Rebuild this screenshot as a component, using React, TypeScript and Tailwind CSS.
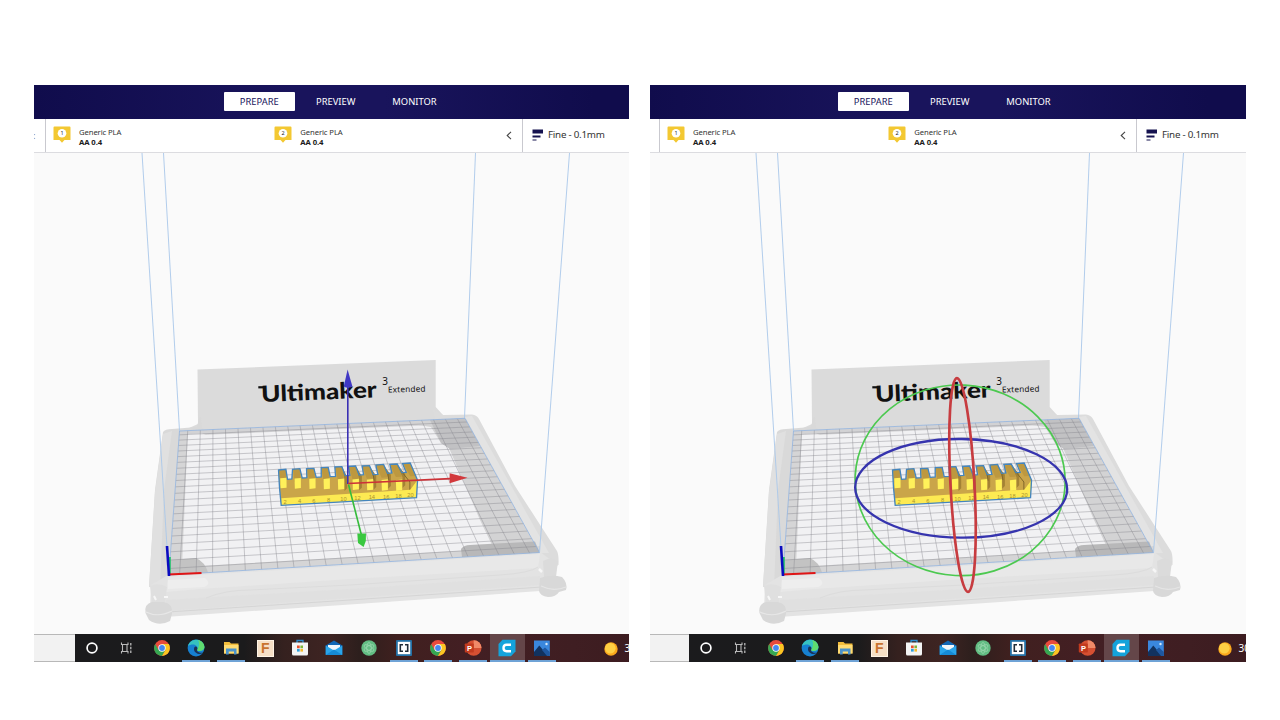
import React from "react";

type Pt = [number, number];

// Build plate corners on screen: back-left, back-right, front-right, front-left
const BL: Pt = [179.5, 431];
const BR: Pt = [465, 418.3];
const FR: Pt = [539.5, 552.5];
const FL: Pt = [168.8, 575];

function project(u: number, v: number): Pt {
  const dx1 = BR[0] - FR[0], dx2 = FL[0] - FR[0], sx = BL[0] - BR[0] + FR[0] - FL[0];
  const dy1 = BR[1] - FR[1], dy2 = FL[1] - FR[1], sy = BL[1] - BR[1] + FR[1] - FL[1];
  const det = dx1 * dy2 - dx2 * dy1;
  const g = (sx * dy2 - dx2 * sy) / det;
  const h = (dx1 * sy - sx * dy1) / det;
  const a = BR[0] - BL[0] + g * BR[0], b = FL[0] - BL[0] + h * FL[0];
  const d = BR[1] - BL[1] + g * BR[1], e = FL[1] - BL[1] + h * FL[1];
  const w = g * u + h * v + 1;
  return [(a * u + b * v + BL[0]) / w, (d * u + e * v + BL[1]) / w];
}

function gridPath(): string {
  let p = "";
  for (let k = -11; k <= 11; k++) {
    const u = (11.65 + k) / 23.3;
    const s = project(u, 0), t = project(u, 1);
    p += `M${s[0].toFixed(2)} ${s[1].toFixed(2)}L${t[0].toFixed(2)} ${t[1].toFixed(2)}`;
  }
  for (let k = -10; k <= 10; k++) {
    const v = (10.75 + k) / 21.5;
    const s = project(0, v), t = project(1, v);
    p += `M${s[0].toFixed(2)} ${s[1].toFixed(2)}L${t[0].toFixed(2)} ${t[1].toFixed(2)}`;
  }
  return p;
}
const GRID = gridPath();

/* ---------- model: stepped ruler, drawn at three times its screen size ---------- */
const TEETH: [number, number, number][] = [
  // left, top, lean of the top towards the left
  [163, 329, 2], [206, 327, 3], [250, 325, 5], [293, 323, 5], [336, 321, 7],
  [380, 319, 10], [423, 317, 13], [467, 314, 15], [510, 312, 18], [553, 310, 20],
];
const LABELS: [string, number, number][] = [
  ["2", 180, 432], ["4", 223, 430], ["6", 266, 428], ["8", 310, 426], ["10", 355, 423],
  ["12", 397, 421], ["14", 440, 418], ["16", 483, 416], ["18", 520, 414], ["20", 556, 412],
];

const OUTLINE =
  "M160 330L182 328L187 358L200 357L202 328L224 326L231 354L245 353L244 326L266 325L273 352L288 351L288 323L309 322L315 350L331 349L329 321L350 320L360 347L374 346L370 319L391 318L402 345L415 344L411 318L433 317L444 344L458 343L452 315L475 313L487 340L500 339L494 313L516 312L530 338L543 337L532 311L555 309L577 360L574 413L168 436L163 384Z";

const Model = () => (
  <g transform="translate(225.2 360) scale(0.33333)">
    <path d={OUTLINE} fill="#caa549" />
    {TEETH.map(([x, top, lean], i) => (
      <g key={i}>
        <path d={`M${x - lean + 1} ${top}L${x - lean + 22} ${top - 1}L${x + 20} ${top + 38}L${x + 2} ${top + 39}Z`} fill="#bd983f" />
        {i > 3 && i < 9 && (
          <path
            d={`M${x - lean + 22} ${top}L${x + 22} ${top + 40}V${top + 72}L${x + 30} ${top + 64}L${x + 30} ${top + 30}Z`}
            fill="#a38234"
          />
        )}
      </g>
    ))}
    {TEETH.slice(0, 9).map(([x], i) => (
      <path key={i} d={`M${x + 2} ${355 + i * 0.7}L${x + 21} ${353 + i * 0.7}V${383 + i}L${x + 3} ${385 + i}Z`} fill="#fff15a" />
    ))}
    <path d="M532 338L554 366V392M488 341L491 360M444 344L447 362" stroke="#80662a" strokeWidth="3" fill="none" />
    <path d="M168 415L555 389L577 360L574 413L168 436Z" fill="#fdea52" />
    {LABELS.map(([t, x, y]) => (
      <text key={t} x={x} y={y} fontSize="17" textAnchor="middle" fill="#a8912f" fontFamily="'Liberation Sans', sans-serif">
        {t}
      </text>
    ))}
    <path d={OUTLINE} fill="none" stroke="#4485be" strokeWidth="4" />
  </g>
);

const MoveTool = () => (
  <g strokeWidth="1.6" fill="none">
    <path d="M347.800 484V386" stroke="#3a30b4" />
    <path d="M347.600 369.500L343.800 386.500Q348 389 352.400 386.500Z" fill="#4038c4" />
    <path d="M348 483.500L450 478.600" stroke="#cc3238" />
    <path d="M467.500 477.800L449.600 473.200V483.200Z" fill="#d2383c" />
    <path d="M348.500 484.500L361.400 535" stroke="#35bb3b" />
    <path d="M357.300 533.500H366L365.800 541L363.600 547L358 543Z" fill="#3ac840" />
  </g>
);

const RotateTool = () => (
  <g transform="translate(225.5 360) scale(0.33333)" fill="none">
    <ellipse cx="362" cy="361" rx="315" ry="286" stroke="#4cc950" strokeWidth="5" transform="rotate(3 362 361)" />
    <ellipse cx="365" cy="385" rx="318" ry="148" stroke="#3634ae" strokeWidth="7" transform="rotate(0.6 365 385)" />
    <ellipse cx="369" cy="375" rx="36" ry="321" stroke="#c73c40" strokeWidth="8" transform="rotate(-3 369 375)" />
  </g>
);

const Scene = ({ tool }: { tool: "move" | "rotate" }) => (
  <svg className="block h-[481px] w-[600px] shrink-0 bg-[#fafafa]" viewBox="34 153 600 481">
    {/* back plate */}
    <path d="M197.5 369.500L435.700 360V407L443 415L465 417V420L180 432L198 424Z" fill="#dbdbdb" />
    {/* frame arms */}
    <path d="M163 432Q165 429 172 429L197 427L199 418L201 417L202 428L206 431L180 433L168.500 576L166 588L149 587L155 490Z" fill="#d9d9d9" />
    <path d="M163 434L155 492L149 587L160 588L164 490L172 431Z" fill="#e0e0e0" />
    <path d="M432 409L443 415L472 414.500Q477 415 479 419L515 486L557 551Q559 555 558.500 565L540 566V552L465 418L436 420Z" fill="#dcdcdc" />
    <path d="M465 417L472 416L549 553L540 553Z" fill="#e3e3e3" />
    {/* front beam */}
    <path d="M151 585L168 575L540 552L558 565L549 576L560 580L540 591L350 604.500L172 616.500L150 609Z" fill="#e3e3e3" />
    <path d="M168 577L540 554L538 568L350 579L200 589L166 592Z" fill="#e8e8e8" />
    <path d="M166 600L350 589L540 576V585L350 598L166 611Z" fill="#dedede" opacity=".65" />
    <path d="M168 612L350 600L542 587" stroke="#d5d5d5" strokeWidth="1" fill="none" />
    <path d="M206 598Q225 590 250 590L350 585L500 575Q530 573 538 567" stroke="#dcdcdc" strokeWidth="1" fill="none" />
    <path d="M168 580L205 578Q212 584 204 587L168 589Z" fill="#eeeeee" />
    {/* feet */}
    <path d="M150 586Q158 582 167 587L165 602Q158 605 152 602Z" fill="#dfdfdf" />
    <path d="M154 596L156 600M164 597H168" stroke="#f6f6f6" strokeWidth="2" />
    <path d="M152 602H164Q172 604 172 610V614L170 621Q159 627 149 620L145.500 613Q144 604 152 602Z" fill="#d8d8d8" />
    <path d="M146 612Q158 618 172 611" fill="none" stroke="#e7e7e7" strokeWidth="1.200" />
    <path d="M543 561Q551 556 558 561L556 577H544Z" fill="#dbdbdb" />
    <path d="M539 569L542 572" stroke="#f6f6f6" strokeWidth="2.500" />
    <path d="M540 578Q551 574 562 577Q568 583 566 590L559 592Q556 597 548 597Q540 596 539 591Z" fill="#d8d8d8" />
    <path d="M541 586Q553 592 566 587" fill="none" stroke="#e5e5e5" strokeWidth="1.200" />
    {/* bed */}
    <path d="M179.500 431L465 418.300L539.500 552.500L168.800 575Z" fill="#f1f1f3" />
    <path d="M179.500 431L188 430.600L182 567L540 546V552.500L168.800 575Z" fill="#d5d5d6" />
    <path d="M179.500 431L465 418.300L468 423.500L206 434.800L202 433.500L179.500 434.500Z" fill="#d2d2d4" />
    <path d="M407 421L465 418.300L539.500 552.500L497 555.500L480 520L449 448L441 443L431 427L418 425Z" fill="#d3d3d4" />
    <path d="M430 420L465 418.300L480 446L450 449L441 443Z" fill="#c1c1c3" />
    <path d="M461 549Q464 545 470 545L535 541.500L539.500 552.500L462 557Z" fill="#b8b8b9" />
    <path d="M170 560L196 558Q205 562 208 572.500L168.800 575Z" fill="#c3c3c3" />
    <path d={GRID} fill="none" stroke="#85858b" strokeWidth=".55" opacity=".75" />
    <path d="M179.500 431L465 418.300L539.500 552.500L168.800 575Z" fill="none" stroke="#91b2de" strokeWidth=".8" />
    {/* print volume edges */}
    <path d="M142 153L168.800 575M163.500 153L179.500 431M475.500 153L464.500 418M569.500 153L539.500 552.500" stroke="#a9c7ea" strokeWidth=".9" />
    {/* nameplate */}
    <g fill="#111">
      <text transform="translate(261.500 402) rotate(-2.300)" fontFamily="Lato, sans-serif" fontWeight="900" fontSize="22.500" textLength="115.500" lengthAdjust="spacingAndGlyphs">
        Ultimaker
      </text>
      <text x="382.300" y="385" fontFamily="'Noto Sans', sans-serif" fontSize="10">3</text>
      <text transform="translate(388 392.500) rotate(-1.500)" fontFamily="'Noto Sans', sans-serif" fontSize="8.200" textLength="37.500">
        Extended
      </text>
    </g>
    <path d="M258.300 387.300H264.500" stroke="#111" strokeWidth="2.200" fill="none" />
    {/* origin axes */}
    <path d="M169.800 574V557" stroke="#21c46b" strokeWidth="2" />
    <path d="M168 574.500L201.500 573" stroke="#e01515" strokeWidth="2.200" />
    <path d="M169 576L167 546" stroke="#0a0ac0" strokeWidth="2.600" />
    <Model />
    {tool === "move" ? <MoveTool /> : <RotateTool />}
  </svg>
);

/* ---------- taskbar icons ---------- */
const Svg = ({ children }: { children: React.ReactNode }) => (
  <svg className="block h-[18px] w-[18px]" viewBox="0 0 18 18">
    {children}
  </svg>
);
const Ring = () => (
  <Svg><circle cx="9" cy="9" r="4.900" fill="none" stroke="#fff" strokeWidth="1.700" /></Svg>
);
const TaskView = () => (
  <Svg>
    <path d="M3.500 3.500V5.500H10V3.500M3.500 14.500V12.500H10V14.500M4.500 5.500V12.500M9 5.500V12.500" fill="none" stroke="#b9b9b9" strokeWidth="1.100" />
    <path d="M12.800 4V14" stroke="#b9b9b9" strokeWidth="1.300" strokeDasharray="2.500 1.200" />
  </Svg>
);
const Chrome = () => (
  <Svg>
    <circle cx="9" cy="9" r="7.900" fill="#e94b3c" />
    <path d="M2.160 5.050A7.900 7.900 0 0 0 9 16.900L12.500 11L9 9L5.500 11Z" fill="#35a852" />
    <path d="M9 16.900A7.900 7.900 0 0 0 15.840 5.100H9L12.500 11Z" fill="#fbc622" />
    <circle cx="9" cy="9" r="3.700" fill="#fff" />
    <circle cx="9" cy="9" r="2.900" fill="#4688f1" />
  </Svg>
);
const Edge = () => (
  <Svg>
    <circle cx="9" cy="9" r="8.400" fill="#1680d0" />
    <path d="M.9 7C2.500 2 6.500 .6 10 .7C15 1.200 17.400 5 17.400 8C17.400 11 14.500 12 12 12C10 12 10 11 10.500 10C11 8 9 5.500 6 5.500C4 5.500 2 6 .9 7Z" fill="#36c2c0" />
    <path d="M11 .9C15 1.800 17.400 5 17.400 8C17.400 11 14.500 12 12 12C10 12 10 11 10.500 10C12 8 13 4 11 .9Z" fill="#5fdc70" />
    <path d="M7.500 8C6 11 8 14.500 12 15Q14.500 15 16 13.500C12.500 14.500 9 12.500 10.300 10C11 8 8.500 6.500 7.500 8Z" fill="#1b3156" />
  </Svg>
);
const Folder = () => (
  <Svg>
    <path d="M2 3H7.500L9 4.500H16.500V14.500H2Z" fill="#f2bd3c" />
    <path d="M2 6H16.500V14.500H2Z" fill="#ffdc73" />
    <path d="M4 15.500V9.500H14.500V15.500H12V12.500H6.700V15.500Z" fill="#4b93cb" />
  </Svg>
);
const Fusion = () => (
  <div className="flex h-[17px] w-[17px] items-center justify-center border border-[#fff4e6] bg-[#f6dfc6] font-['Liberation_Sans',sans-serif] text-[14px] leading-none font-bold text-[#c9732f]">
    F
  </div>
);
const Store = () => (
  <Svg>
    <path d="M6 5V1.500H12V5" fill="none" stroke="#2c8ed0" strokeWidth="1.300" />
    <path d="M1 3.500H17V15Q17 16.500 15.500 16.500H2.500Q1 16.500 1 15Z" fill="#f4f4f4" />
    <path d="M6 6.500H8.700V9.200H6Z" fill="#e8502d" /><path d="M9.400 6.500H12V9.200H9.400Z" fill="#7db63c" />
    <path d="M6 9.900H8.700V12.600H6Z" fill="#2c9fdd" /><path d="M9.400 9.900H12V12.600H9.400Z" fill="#f5b92a" />
  </Svg>
);
const Mail = () => (
  <Svg>
    <path d="M.7 6.500L9 1.500L17.300 6.500V15.500H.7Z" fill="#1267b5" />
    <path d="M3 6H15V11H3Z" fill="#f2f6fa" />
    <path d="M.7 6.500L9 11.500L17.300 6.500V16H.7Z" fill="#2aa5ea" />
    <path d="M.7 16L9 10.500L17.300 16Z" fill="#168bd6" />
  </Svg>
);
const Atom = () => (
  <Svg>
    <circle cx="9" cy="9" r="7.700" fill="#62bd83" />
    <g fill="none" stroke="#a5dcb7" strokeWidth=".6">
      <ellipse cx="9" cy="9" rx="5.500" ry="2.200" transform="rotate(30 9 9)" />
      <ellipse cx="9" cy="9" rx="5.500" ry="2.200" transform="rotate(90 9 9)" />
      <ellipse cx="9" cy="9" rx="5.500" ry="2.200" transform="rotate(150 9 9)" />
    </g>
  </Svg>
);
const Brackets = () => (
  <Svg>
    <rect x="1" y="1" width="16" height="16" rx="1" fill="#2470a5" />
    <rect x="2.800" y="2.800" width="12.400" height="12.400" fill="#fff" />
    <path d="M8 5.700H5.300V12.300H8M10 5.700H12.700V12.300H10" fill="none" stroke="#222d38" strokeWidth="1.600" />
  </Svg>
);
const Slides = () => (
  <Svg>
    <circle cx="9.700" cy="9" r="7.800" fill="#d65032" />
    <path d="M9.700 1.200A7.800 7.800 0 0 1 17.500 9H9.700Z" fill="#f18a68" />
    <rect x=".8" y="4.500" width="9" height="9" rx=".8" fill="#c23a1e" />
    <text x="3" y="11.800" fontSize="7.500" fontWeight="700" fill="#fff" fontFamily="'Liberation Sans', sans-serif">P</text>
  </Svg>
);
const Cura = () => (
  <Svg>
    <path d="M4.500 .7H17.500V12.500L13 17.300H.5V5Z" fill="#14a3db" />
    <path d="M13 5.700H8.500Q5.500 5.700 5.500 9Q5.500 12.200 8.500 12.200H13" fill="none" stroke="#fff" strokeWidth="2.400" />
  </Svg>
);
const Photos = () => (
  <Svg>
    <rect x="1" y="1.500" width="15.800" height="15.500" fill="#3a87dd" />
    <path d="M1 13L6.300 6.500L15 17H1Z" fill="#12325f" />
    <path d="M9 11L12 8.500L16.800 13V17H14Z" fill="#1e57a0" />
    <circle cx="13.500" cy="5" r="1.200" fill="#d5e8fa" />
  </Svg>
);

const APPS: { icon: React.FC; open?: boolean; active?: boolean }[] = [
  { icon: Ring }, { icon: TaskView }, { icon: Chrome }, { icon: Edge, open: true },
  { icon: Folder, open: true }, { icon: Fusion }, { icon: Store }, { icon: Mail },
  { icon: Atom }, { icon: Brackets, open: true }, { icon: Chrome, open: true },
  { icon: Slides, open: true }, { icon: Cura, open: true, active: true }, { icon: Photos, open: true },
];

const Taskbar = () => (
  <div className="flex h-[28px] w-[620px] bg-[linear-gradient(90deg,#1b1b1d_0,#1b1b1c_210px,#35211f_250px,#3e2422_295px,#2d1f1d_325px,#40201f_365px,#431f23_430px,#3f1e22_540px,#3c1c20_600px)]">
    <div className="w-[41.200px] shrink-0 border-y border-[#b8b8b8] bg-[#f2f2f2]" />
    {APPS.map(({ icon: Icon, open, active }, i) => (
      <div
        key={i}
        className={`flex w-[34.570px] shrink-0 flex-col items-center ${active ? "bg-[#644649]" : ""}`}
      >
        <div className="flex h-[26px] items-center pt-[2px]"><Icon /></div>
        <div className={`h-[2px] ${active ? "w-full" : "w-[28px]"} ${open ? "bg-[#6fa3d6]" : ""}`} />
      </div>
    ))}
    <div className="flex shrink-0 items-center gap-[7px] pt-[1px] pl-[44.500px] text-[10px] text-white">
      <svg className="h-[14px] w-[14px]" viewBox="0 0 14 14">
        <circle cx="7" cy="7" r="6.700" fill="#fba81c" />
        <circle cx="6.300" cy="6.300" r="5.300" fill="#ffd044" />
      </svg>
      <span>30</span>
    </div>
  </div>
);

const Extruder = ({ n }: { n: number }) => (
  <div className="flex w-[221.300px] shrink-0 items-start">
    <svg className="mt-[7.500px] h-[18px] w-[18px] shrink-0" viewBox="0 0 18 18">
      <path d="M.5 1.500Q.5 .5 1.500 .5H16.500Q17.500 .5 17.500 1.500V14H11.500L9 16.800L6.500 14H.5Z" fill="#f3c832" />
      <circle cx="9" cy="7.200" r="4.300" fill="#fff" />
      <text x="9" y="9.200" fontSize="5.500" textAnchor="middle" fill="#222" fontFamily="'Noto Sans', sans-serif">{n}</text>
    </svg>
    <div className="flex flex-col pt-[8px] pl-[8px] text-[7.700px] leading-[10.500px] tracking-[-0.1px] text-[#333]">
      <span>Generic PLA</span>
      <span className="font-bold text-[#1c1c1c]">AA 0.4</span>
    </div>
  </div>
);

const Panel = ({ tool }: { tool: "move" | "rotate" }) => {
  const move = tool === "move";
  return (
    <section className={`h-[577px] shrink-0 overflow-hidden ${move ? "w-[595px]" : "w-[596px]"}`}>
      <div className={`w-[612px] ${move ? "" : "ml-[-2px]"}`}>
        <nav className="flex h-[33.500px] items-center bg-[linear-gradient(90deg,#100c4c_0,#19145c_260px,#19145c_350px,#100c4c_560px)] pl-[189.500px] text-[9.400px] text-white">
          <span className="flex h-[19px] w-[71.500px] items-center justify-center rounded-[1px] bg-white text-[#19145c]">PREPARE</span>
          <span className="w-[81.500px] text-center">PREVIEW</span>
          <span className="w-[76px] text-center">MONITOR</span>
        </nav>
        <div className="flex h-[34.500px] border-b border-[#dcdce0] bg-white">
          <div className="flex w-[11.500px] items-center border-r border-[#c9c9cf] text-[9px] text-[#777]">
            {move && <span className="-ml-[1px]">:</span>}
          </div>
          <div className="flex w-[476.500px] pl-[7.500px]">
            <Extruder n={1} />
            <Extruder n={2} />
            <svg className="mt-[12.500px] ml-[10.500px] h-[9px] w-[6px] shrink-0" viewBox="0 0 6 9">
              <path d="M5 .8L1.200 4.500L5 8.200" fill="none" stroke="#444" strokeWidth="1.100" />
            </svg>
          </div>
          <div className="flex flex-1 items-center gap-[5px] border-l border-[#c9c9cf] pl-[8.500px] text-[9.800px] tracking-[-0.25px] text-[#333]">
            <svg className="h-[12px] w-[11.500px]" viewBox="0 0 11.5 12">
              <path d="M.5 .5H11.500V4.500H.5ZM.5 6.500H8.500V8.500H.5ZM.5 10.500H4.500V11.500H.5Z" fill="#15124f" />
            </svg>
            <span className="pt-[1px]">Fine - 0.1mm</span>
          </div>
        </div>
        <Scene tool={tool} />
        <Taskbar />
      </div>
    </section>
  );
};

export default function App() {
  return (
    <main className="flex h-[720px] w-[1280px] gap-[21px] overflow-hidden bg-white pt-[85px] pl-[34px] font-['Noto_Sans',sans-serif]">
      <Panel tool="move" />
      <Panel tool="rotate" />
    </main>
  );
}
